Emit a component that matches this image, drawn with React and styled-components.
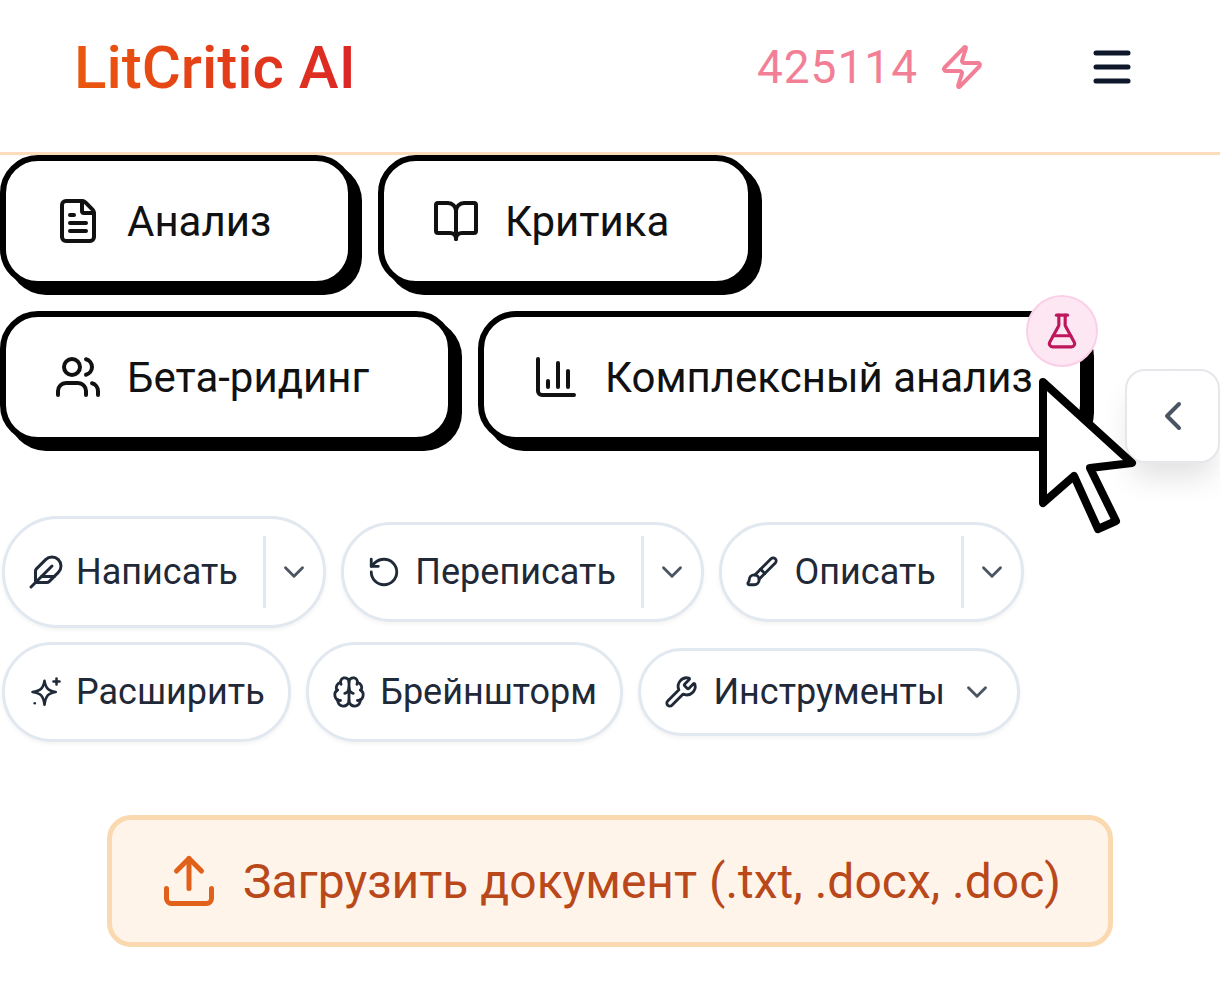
import React from 'react';
import styled, { createGlobalStyle } from 'styled-components';
import {
  FileText, BookOpen, Users, ChartColumn, FlaskConical, ChevronLeft, ChevronDown,
  Feather, RotateCcw, Brush, Brain, Wrench, Upload, Zap, Menu,
} from 'lucide-react';

const Global = createGlobalStyle`
  html, body { margin: 0; padding: 0; background: #fff; overflow: hidden; }
  * { box-sizing: border-box; }
  body { font-family: Roboto, "Noto Sans", sans-serif; }
`;

const Page = styled.div`
  position: relative;
  width: 1220px;
  height: 992px;
  overflow: hidden;
  background: #fff;
`;

const Header = styled.header`
  height: 155px;
  display: flex;
  align-items: center;
  padding: 0 84px 18px 74px;
  border-bottom: 3px solid #fbdcbb;
`;

const Logo = styled.div`
  font-size: 60px;
  font-weight: 500;
  background: linear-gradient(90deg, #ea580c, #dc2626);
  -webkit-background-clip: text;
  background-clip: text;
  color: transparent;
`;

const Credits = styled.div`
  margin-left: auto;
  display: flex;
  align-items: center;
  gap: 20px;
  font-size: 46px;
  letter-spacing: 1px;
  color: #f27f96;
`;

const MenuButton = styled.div`
  display: flex;
  margin-left: 102px;
  color: #0f172a;
`;

const Tabs = styled.div`
  display: flex;
  flex-wrap: wrap;
  gap: 24px;
  width: 1120px;
`;

const Tab = styled.div`
  position: relative;
  height: 132px;
  width: ${({ $w }) => $w}px;
  display: flex;
  align-items: center;
  gap: 25px;
  padding-left: 48px;
  border: 6px solid #000;
  border-radius: 38px;
  background: #fff;
  box-shadow: 8px 8px 0 #000;
  font-size: 42px;
  color: #111;
  svg { flex: none; }
`;

const LabBadge = styled.div`
  position: absolute;
  top: -22px;
  right: -18px;
  width: 72px;
  height: 72px;
  border-radius: 50%;
  display: flex;
  align-items: center;
  justify-content: center;
  background: #fce7f3;
  border: 2px solid #fbcfe8;
  color: #be185d;
`;

const SideHandle = styled.div`
  position: absolute;
  left: 1125px;
  top: 369px;
  width: 95px;
  height: 94px;
  display: flex;
  align-items: center;
  justify-content: center;
  border: 2px solid #e5e7eb;
  border-radius: 20px;
  background: #fff;
  color: #4b5563;
  box-shadow: 0 20px 30px -6px rgba(0, 0, 0, 0.12);
`;

const Pointer = styled.svg`
  position: absolute;
  left: 1030px;
  top: 366px;
`;

const Tools = styled.div`
  display: flex;
  flex-wrap: wrap;
  align-items: center;
  gap: 14px 15.5px;
  margin: 73px 0 0 2px;
  width: 1040px;
`;

const Pill = styled.div`
  height: ${({ $h }) => $h}px;
  display: flex;
  align-items: center;
  padding: 0 ${({ $split }) => ($split ? 12 : 23)}px 0 23px;
  border: 3px solid #e2e8f0;
  border-radius: 60px;
  background: #fff;
  box-shadow: 0 2px 4px rgba(15, 23, 42, 0.05);
  font-size: 36px;
  color: #1f2937;
  svg { flex: none; }
`;

const PillLabel = styled.span`
  margin-left: ${({ $gap }) => $gap || 12}px;
`;

const Divider = styled.span`
  width: 3px;
  height: 72px;
  margin: 0 11px 0 25px;
  background: #e2e8f0;
`;

const Caret = styled(ChevronDown)`
  color: #4b5563;
  margin-left: ${({ $gap }) => $gap || 0}px;
`;

const UploadBox = styled.div`
  width: 1006px;
  height: 132px;
  margin: 73px 0 0 107px;
  display: flex;
  align-items: center;
  justify-content: center;
  gap: 24px;
  border: 5px solid #fad9b0;
  border-radius: 24px;
  background: #fff4e9;
  font-size: 48px;
  color: #b9481a;
  white-space: nowrap;
  svg { color: #e2611a; }
`;

function StarIcon() {
  return (
    <svg width="36" height="36" viewBox="0 0 24 24" fill="none" stroke="currentColor" strokeWidth="1.7" strokeLinejoin="round" strokeLinecap="round">
      <path d="M11 4.5 C11.8 9.5 13.5 11.2 18.5 12 C13.5 12.8 11.8 14.5 11 20.5 C10.2 14.5 8.5 12.8 3 12 C8.5 11.2 10.2 9.5 11 4.5 Z" />
      <path d="M19 3 V7 M17 5 H21" />
      <path d="M4.5 19.5 h.01" />
    </svg>
  );
}

export default function App() {
  return (
    <Page>
      <Global />
      <Header>
        <Logo>LitCritic AI</Logo>
        <Credits>
          425114
          <Zap size={48} strokeWidth={2} />
        </Credits>
        <MenuButton>
          <Menu size={48} strokeWidth={2.5} />
        </MenuButton>
      </Header>

      <Tabs>
        <Tab $w={354}><FileText size={48} strokeWidth={2} />Анализ</Tab>
        <Tab $w={376}><BookOpen size={48} strokeWidth={2} />Критика</Tab>
        <Tab $w={454}><Users size={48} strokeWidth={2} />Бета-ридинг</Tab>
        <Tab $w={608}>
          <ChartColumn size={48} strokeWidth={2} />
          Комплексный анализ
          <LabBadge><FlaskConical size={38} strokeWidth={2} /></LabBadge>
        </Tab>
      </Tabs>

      <Tools>
        <Pill $h={112} $split>
          <Feather size={36} strokeWidth={2} />
          <PillLabel>Написать</PillLabel>
          <Divider />
          <Caret size={34} strokeWidth={2} />
        </Pill>
        <Pill $h={100} $split>
          <RotateCcw size={34} strokeWidth={2} />
          <PillLabel $gap={14}>Переписать</PillLabel>
          <Divider />
          <Caret size={34} strokeWidth={2} />
        </Pill>
        <Pill $h={100} $split>
          <Brush size={34} strokeWidth={2} />
          <PillLabel $gap={15}>Описать</PillLabel>
          <Divider />
          <Caret size={34} strokeWidth={2} />
        </Pill>
        <Pill $h={100}>
          <StarIcon />
          <PillLabel>Расширить</PillLabel>
        </Pill>
        <Pill $h={100}>
          <Brain size={34} strokeWidth={2} />
          <PillLabel $gap={14}>Брейншторм</PillLabel>
        </Pill>
        <Pill $h={88}>
          <Wrench size={34} strokeWidth={2} />
          <PillLabel $gap={15}>Инструменты</PillLabel>
          <Caret size={34} strokeWidth={2} $gap={15} />
        </Pill>
      </Tools>

      <UploadBox>
        <Upload size={60} strokeWidth={2} />
        Загрузить документ (.txt, .docx, .doc)
      </UploadBox>

      <SideHandle><ChevronLeft size={48} strokeWidth={2} /></SideHandle>

      <Pointer width="115" height="172" viewBox="0 0 115 172">
        <path
          d="M13 16 L102 97 L60 102 L86 155 L68 163 L44 110 L13 137 Z"
          fill="#fff"
          stroke="#000"
          strokeWidth="8"
          strokeLinejoin="round"
        />
      </Pointer>
    </Page>
  );
}
